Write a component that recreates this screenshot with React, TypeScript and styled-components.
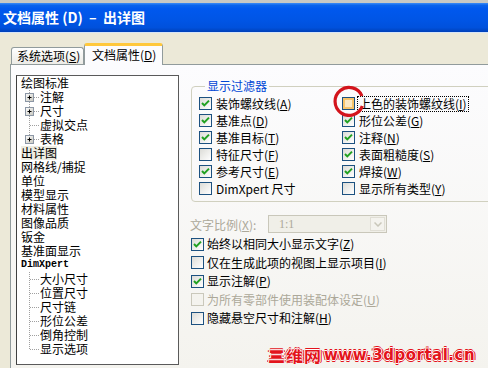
import React from 'react';
import styled, { createGlobalStyle } from 'styled-components';

// 全局样式
const GlobalStyle = createGlobalStyle`
  html, body {
    margin: 0;
    padding: 0;
  }
  body {
    width: 488px;
    height: 368px;
    overflow: hidden;
    background: #ECE9D8;
    font-family: "Noto Sans CJK SC", "Noto Sans", sans-serif;
    font-size: 12px;
    color: #000;
  }
`;

type TreeRow = {
  label: string;
  child?: boolean;
  box?: boolean;
  last?: boolean;
  selected?: boolean;
  mono?: boolean;
};

const treeRows: TreeRow[] = [
  { label: '绘图标准' },
  { label: '注解', child: true, box: true },
  { label: '尺寸', child: true, box: true },
  { label: '虚拟交点', child: true },
  { label: '表格', child: true, box: true, last: true },
  { label: '出详图', selected: true },
  { label: '网格线/捕捉' },
  { label: '单位' },
  { label: '模型显示' },
  { label: '材料属性' },
  { label: '图像品质' },
  { label: '钣金' },
  { label: '基准面显示' },
  { label: 'DimXpert', mono: true },
  { label: '大小尺寸', child: true },
  { label: '位置尺寸', child: true },
  { label: '尺寸链', child: true },
  { label: '形位公差', child: true },
  { label: '倒角控制', child: true },
  { label: '显示选项', child: true, last: true },
];

type Opt = {
  text: string;
  key?: string;
  checked?: boolean;
  hover?: boolean;
  disabled?: boolean;
};

// 显示过滤器（按行排列，两列）
const filterOpts: Opt[] = [
  { text: '装饰螺纹线', key: 'A', checked: true },
  { text: '上色的装饰螺纹线', key: 'I', hover: true },
  { text: '基准点', key: 'D', checked: true },
  { text: '形位公差', key: 'G', checked: true },
  { text: '基准目标', key: 'T', checked: true },
  { text: '注释', key: 'N', checked: true },
  { text: '特征尺寸', key: 'F' },
  { text: '表面粗糙度', key: 'S', checked: true },
  { text: '参考尺寸', key: 'E', checked: true },
  { text: '焊接', key: 'W', checked: true },
  { text: 'DimXpert 尺寸' },
  { text: '显示所有类型', key: 'Y' },
];

const lowerOpts: Opt[] = [
  { text: '始终以相同大小显示文字', key: 'Z', checked: true },
  { text: '仅在生成此项的视图上显示项目', key: 'I' },
  { text: '显示注解', key: 'P', checked: true },
  { text: '为所有零部件使用装配体设定', key: 'U', disabled: true },
  { text: '隐藏悬空尺寸和注解', key: 'H' },
];

// 树的连接线
const Connector: React.FC<{ box?: boolean; last?: boolean }> = ({ box, last }) => (
  <svg width="19" height="14" viewBox="0 0 19 14">
    <line x1="8.5" y1="0" x2="8.5" y2={last ? 7 : 14} stroke="#A0A0A0" strokeDasharray="1 1" />
    <line x1={box ? 13 : 9} y1="7.5" x2="18" y2="7.5" stroke="#A0A0A0" strokeDasharray="1 1" />
    {box && (
      <>
        <defs>
          <linearGradient id="bx" x1="0" y1="0" x2="1" y2="1">
            <stop offset="0" stopColor="#FFFFFF" />
            <stop offset="1" stopColor="#C6C5BC" />
          </linearGradient>
        </defs>
        <rect x="4.5" y="3.5" width="8" height="8" fill="url(#bx)" stroke="#8C97A6" />
        <line x1="6.5" y1="7.5" x2="10.5" y2="7.5" stroke="#000" />
        <line x1="8.5" y1="5.5" x2="8.5" y2="9.5" stroke="#000" />
      </>
    )}
  </svg>
);

const CheckBox: React.FC<{ opt: Opt }> = ({ opt }) => (
  <Box $hover={opt.hover} $disabled={opt.disabled}>
    {opt.checked && (
      <svg width="11" height="11" viewBox="0 0 11 11">
        <path d="M2 5 L4.3 7.4 L9 2.6" fill="none" stroke="#21A121" strokeWidth="2" />
      </svg>
    )}
  </Box>
);

const OptLabel: React.FC<{ opt: Opt }> = ({ opt }) => (
  <Label $focus={opt.hover}>
    {opt.text}
    {opt.key && (
      <>
        (<u>{opt.key}</u>)
      </>
    )}
  </Label>
);

const App: React.FC = () => {
  return (
    <Window>
      <GlobalStyle />
      <TitleBar>文档属性 (D)&nbsp; –&nbsp; 出详图</TitleBar>
      <Body>
        <Tabs>
          <Tab>系统选项(<u>S</u>)</Tab>
          <Tab $active>文档属性(<u>D</u>)</Tab>
        </Tabs>
        <Panel>
          <Tree>
            {treeRows.map((r) => (
              <Row key={r.label}>
                {r.child && <Connector box={r.box} last={r.last} />}
                <RowText $selected={r.selected} $mono={r.mono}>
                  {r.label}
                </RowText>
              </Row>
            ))}
          </Tree>

          <Right>
            <Group>
              <Legend>显示过滤器</Legend>
              <FilterGrid>
                {filterOpts.map((o) => (
                  <Item key={o.text} $disabled={o.disabled}>
                    <CheckBox opt={o} />
                    <OptLabel opt={o} />
                  </Item>
                ))}
              </FilterGrid>
            </Group>

            <ScaleRow>
              <ScaleLabel>文字比例(<u>X</u>):</ScaleLabel>
              <Combo>
                <ComboText>1:1</ComboText>
                <ComboButton>
                  <svg width="8" height="5" viewBox="0 0 8 5">
                    <path d="M0.5 0.5 L4 4 L7.5 0.5" fill="none" stroke="#C9C7BA" strokeWidth="1.5" />
                  </svg>
                </ComboButton>
              </Combo>
            </ScaleRow>

            <LowerList>
              {lowerOpts.map((o) => (
                <LowerItem key={o.text} $disabled={o.disabled}>
                  <CheckBox opt={o} />
                  <OptLabel opt={o} />
                </LowerItem>
              ))}
            </LowerList>
          </Right>
        </Panel>
      </Body>

      {/* 标注用的红圈 */}
      <RedCircle width="32" height="32" viewBox="0 0 32 32">
        <path
          d="M29 11 A14 14 0 1 0 29.3 21"
          fill="none"
          stroke="#D3141C"
          strokeWidth="3.2"
        />
      </RedCircle>

      {/* 水印 */}
      <Watermark>
        <WmCjk>三维网</WmCjk>
        <WmLatin>www.3dportal.cn</WmLatin>
      </Watermark>
    </Window>
  );
};

export default App;

// 窗口
const Window = styled.div`
  position: relative;
  width: 488px;
  height: 368px;
  overflow: hidden;
  background: #ECE9D8;
  border-top: 3px solid #C8C8C4;
  box-sizing: border-box;
`;

// 标题栏
const TitleBar = styled.div`
  height: 29px;
  line-height: 28px;
  padding-left: 3px;
  color: #fff;
  font-weight: bold;
  font-size: 14px;
  white-space: nowrap;
  background: linear-gradient(
    #3C8CF6 0%,
    #0A63EC 8%,
    #0058EE 20%,
    #0055E5 60%,
    #0051DC 85%,
    #0040B8 100%
  );
  border-bottom: 1px solid #D6E4F8;
`;

const Body = styled.div`
  padding-top: 10px;
  height: 326px;
  box-sizing: border-box;
`;

// 选项卡
const Tabs = styled.div`
  display: flex;
  align-items: flex-end;
  height: 21px;
  padding-left: 11px;
  position: relative;
  z-index: 1;
`;

const Tab = styled.div<{ $active?: boolean }>`
  box-sizing: border-box;
  height: ${({ $active }) => ($active ? '22px' : '17px')};
  width: ${({ $active }) => ($active ? '79px' : '73px')};
  margin-bottom: ${({ $active }) => ($active ? '-1px' : '0')};
  padding-left: ${({ $active }) => ($active ? '7px' : '5px')};
  line-height: ${({ $active }) => ($active ? '18px' : '16px')};
  border: 1px solid #919B9C;
  border-bottom: none;
  border-top: ${({ $active }) => ($active ? '3px solid #FFC83C' : '1px solid #919B9C')};
  border-radius: 3px 3px 0 0;
  background: ${({ $active }) =>
    $active ? '#FCFCFE' : 'linear-gradient(#FFFFFF, #ECEBE6)'};
  font-size: 12px;
  white-space: nowrap;
  overflow: hidden;

  u {
    text-decoration-thickness: 1px;
  }
`;

// 选项卡内容
const Panel = styled.div`
  margin-left: 10px;
  width: 500px;
  height: 306px;
  box-sizing: border-box;
  border: 1px solid #919B9C;
  border-right: none;
  border-bottom: none;
  background: linear-gradient(#FCFCFE, #F4F3EE);
  display: flex;
  padding: 10px 0 0 5px;
`;

// 左侧树
const Tree = styled.div`
  flex: 0 0 163px;
  height: 290px;
  box-sizing: border-box;
  border: 1px solid #5A5A5A;
  border-left-color: #404040;
  background: #fff;
  padding-left: 4px;
  overflow: hidden;
`;

const Row = styled.div`
  display: flex;
  align-items: center;
  height: 14px;
`;

const RowText = styled.div<{ $selected?: boolean; $mono?: boolean }>`
  height: 14px;
  line-height: 14px;
  font-size: ${({ $mono }) => ($mono ? '10px' : '12px')};
  font-family: ${({ $mono }) =>
    $mono ? '"Liberation Mono", monospace' : '"Noto Sans CJK SC", sans-serif'};
  font-weight: ${({ $mono }) => ($mono ? 'bold' : 'normal')};
  background: ${({ $selected }) => ($selected ? '#EEEDE2' : 'transparent')};
  white-space: nowrap;
`;

// 右侧区域
const Right = styled.div`
  flex: 0 0 320px;
  padding-left: 12px;
  box-sizing: border-box;
`;

const Group = styled.fieldset`
  width: 308px;
  box-sizing: border-box;
  margin: 4px 0 0;
  padding: 2px 0 4px 7px;
  border: 1px solid #D0D0BF;
  border-radius: 4px;
  min-width: 0;
`;

const Legend = styled.legend`
  color: #0046D5;
  padding: 0 2px;
  margin-left: 6px;
  height: 14px;
  line-height: 14px;
  font-size: 12px;
`;

const FilterGrid = styled.div`
  display: grid;
  grid-template-columns: 143px 1fr;
  grid-auto-rows: 17px;
`;

const Item = styled.div<{ $disabled?: boolean }>`
  display: flex;
  align-items: center;
  gap: 3px;
  white-space: nowrap;
  color: ${({ $disabled }) => ($disabled ? '#ACA899' : '#000')};
`;

const Box = styled.span<{ $hover?: boolean; $disabled?: boolean }>`
  flex: 0 0 13px;
  width: 13px;
  height: 13px;
  box-sizing: border-box;
  display: flex;
  align-items: center;
  justify-content: center;
  border: 1px solid ${({ $disabled }) => ($disabled ? '#CAC8BB' : '#1C5180')};
  background: ${({ $disabled }) =>
    $disabled ? '#F4F3EE' : 'linear-gradient(135deg, #DCDCD7, #FFFFFF)'};
  box-shadow: ${({ $hover }) => ($hover ? 'inset 0 0 0 2px #F8C46A' : 'none')};
  ${({ $hover }) => ($hover ? 'background: #FBE8C2;' : '')}
`;

const Label = styled.span<{ $focus?: boolean }>`
  display: inline-block;
  height: 14px;
  line-height: 14px;
  font-size: 12px;
  padding: 0 1px;
  outline: ${({ $focus }) => ($focus ? '1px dotted #000' : 'none')};

  u {
    text-decoration-thickness: 1px;
  }
`;

// 文字比例
const ScaleRow = styled.div`
  display: flex;
  align-items: center;
  height: 18px;
  margin-top: 13px;
`;

const ScaleLabel = styled.span`
  width: 78px;
  color: #ACA899;
  margin-left: -1px;
  white-space: nowrap;
`;

const Combo = styled.div`
  width: 119px;
  height: 18px;
  box-sizing: border-box;
  border: 1px solid #C9C7BA;
  background: #F0EFE8;
  display: flex;
  align-items: center;
`;

const ComboText = styled.span`
  flex: 1;
  padding-left: 10px;
  color: #ACA899;
  font-family: "Liberation Serif", serif;
  font-size: 12px;
`;

const ComboButton = styled.span`
  width: 15px;
  height: 14px;
  margin-right: 1px;
  box-sizing: border-box;
  border: 1px solid #E0DED5;
  background: #F4F3EE;
  display: flex;
  align-items: center;
  justify-content: center;
`;

const LowerList = styled.div`
  margin-top: 2px;
`;

const LowerItem = styled.div<{ $disabled?: boolean }>`
  display: flex;
  align-items: center;
  gap: 2px;
  height: 18.5px;
  white-space: nowrap;
  color: ${({ $disabled }) => ($disabled ? '#ACA899' : '#000')};
`;

// 标注红圈
const RedCircle = styled.svg`
  position: absolute;
  left: 333px;
  top: 82px;
`;

// 水印
const Watermark = styled.div`
  position: absolute;
  left: 268px;
  top: 343px;
  display: flex;
  align-items: center;
  color: #E3141C;
  font-weight: bold;
  white-space: nowrap;
  text-shadow:
    1px 0 0 #fff, -1px 0 0 #fff, 0 1px 0 #fff, 0 -1px 0 #fff,
    2px 0 0 #E3141C, -2px 0 0 #E3141C, 0 2px 0 #E3141C, 0 -2px 0 #E3141C;
`;

const WmCjk = styled.span`
  font-family: "Noto Sans CJK SC", sans-serif;
  font-size: 17px;
  line-height: 18px;
  display: inline-block;
  transform: scaleY(0.8);
  letter-spacing: 1px;
`;

const WmLatin = styled.span`
  font-family: "DejaVu Sans", sans-serif;
  font-size: 15px;
  line-height: 18px;
  letter-spacing: 0.5px;
  margin-left: 2px;
`;
